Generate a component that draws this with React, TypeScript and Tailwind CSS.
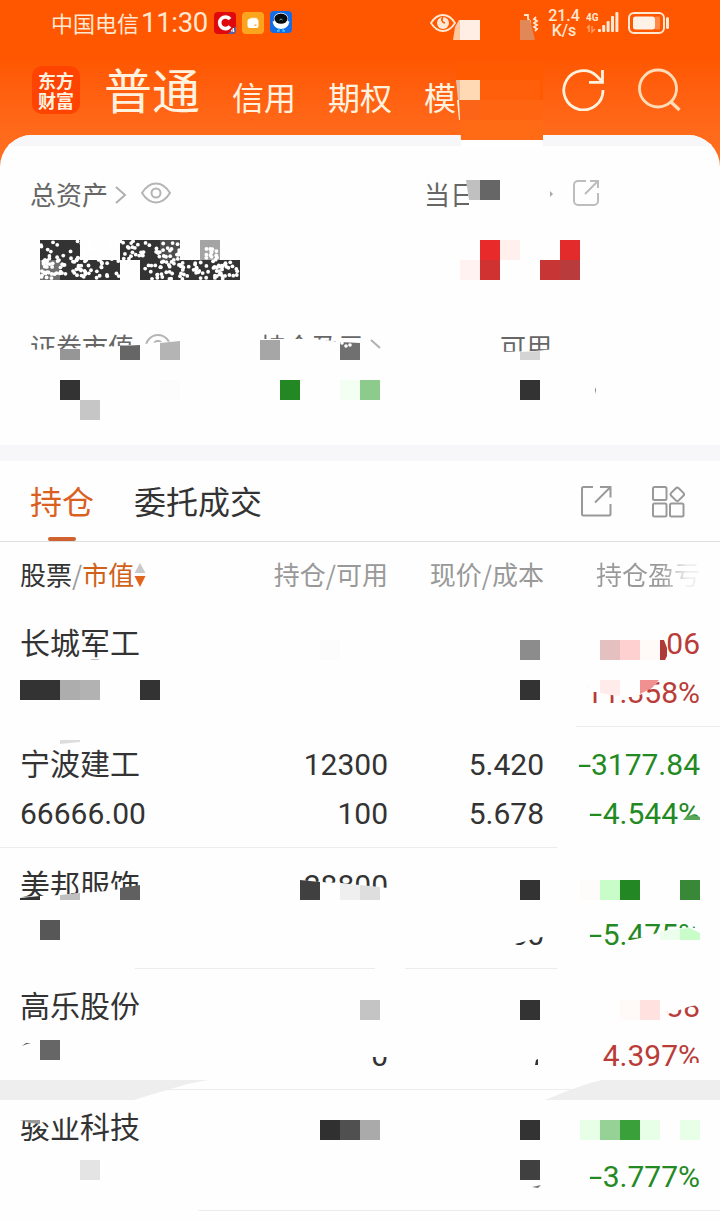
import React from 'react';

type Tone = 'up' | 'down';

interface Holding {
  name: string;
  value: string;
  amount: string;
  available: string;
  price: string;
  cost: string;
  profit: string;
  percent: string;
  tone: Tone;
  line: string;
}

const holdings: Holding[] = [
  { name: '长城军工', value: '', amount: '', available: '', price: '', cost: '', profit: '06', percent: '11.358%', tone: 'up', line: 'ml-[576px] w-[144px]' },
  { name: '宁波建工', value: '66666.00', amount: '12300', available: '100', price: '5.420', cost: '5.678', profit: '-3177.84', percent: '-4.544%', tone: 'down', line: 'w-[557px]' },
  { name: '美邦服饰', value: '', amount: '28800', available: '', price: '', cost: '50', profit: '', percent: '-5.475%', tone: 'down', line: 'ml-[135px] w-[422px]' },
  { name: '高乐股份', value: '', amount: '', available: '0', price: '', cost: '', profit: '38', percent: '4.397%', tone: 'up', line: 'ml-[160px] w-[420px]' },
  { name: '骏业科技', value: '', amount: '', available: '', price: '', cost: '', profit: '', percent: '-3.777%', tone: 'down', line: 'ml-[198px] w-[522px]' },
];

// x, y, width, fill (all blocks are 20px high)
const blocks: [number, number, number, string][] = [
  [40, 240, 40, '#333333'], [120, 240, 40, '#333333'], [160, 240, 20, '#4d4d4d'], [200, 240, 20, '#a4a4a4'],
  [40, 260, 20, '#707070'], [60, 260, 60, '#333333'], [140, 260, 100, '#333333'],
  [480, 240, 20, '#e82a2a'], [500, 240, 20, '#ffefed'], [560, 240, 20, '#e32b2b'],
  [460, 260, 20, '#fff2f0'], [480, 260, 20, '#d03232'], [540, 260, 20, '#c83535'], [560, 260, 20, '#b93b3b'],
  [60, 380, 20, '#333333'], [80, 400, 20, '#c6c6c6'], [160, 380, 20, '#fcfcfc'],
  [280, 380, 20, '#238823'], [340, 380, 20, '#f2fff2'], [360, 380, 20, '#8ccb8c'], [520, 380, 20, '#333333'],
  [320, 640, 20, '#fcfcfc'], [520, 640, 20, '#8c8c8c'], [600, 640, 20, '#e5c0c1'], [620, 640, 20, '#ffd0d0'], [640, 640, 20, '#fffaf8'],
  [20, 680, 40, '#333333'], [60, 680, 20, '#adadad'], [80, 680, 20, '#b2b2b2'], [140, 680, 20, '#333333'], [520, 680, 20, '#333333'],
  [520, 880, 20, '#333333'], [580, 880, 20, '#fefcfa'], [600, 880, 20, '#c8fcc8'], [620, 880, 20, '#238823'], [680, 880, 20, '#388838'],
  [40, 920, 20, '#575757'],
  [360, 1000, 20, '#c4c4c4'], [520, 1000, 20, '#333333'], [620, 1000, 20, '#fffaf8'], [640, 1000, 20, '#ffe2e0'],
  [40, 1040, 20, '#666666'],
  [320, 1120, 20, '#303030'], [340, 1120, 20, '#505050'], [360, 1120, 20, '#aaaaaa'], [520, 1120, 20, '#333333'],
  [580, 1120, 20, '#e6ffe6'], [600, 1120, 20, '#96d296'], [620, 1120, 20, '#3aa03a'], [640, 1120, 20, '#e6ffe6'], [680, 1120, 20, '#e6ffe6'],
  [80, 1160, 20, '#e4e4e4'], [520, 1160, 20, '#404040'],
];

// points, fill
const shapes: [string, string][] = [
  // top bar
  ['453,40 455,27 459,20 460,20 460,40', '#ffc9a0'],
  ['460,20 480,20 480,40 460,40', '#ffeee4'],
  ['520,20 530,20 535,40 520,40', '#e08858'],
  ['456,60 543,60 543,100 459,100 456,80', '#ff5a02'],
  ['459,100 543,100 543,120 460,120', '#ff6510'],
  ['460,120 543,120 543,140 461,140', '#ff6b14'],
  ['456,80 460,80 460,100 458,100', '#e8bda4'],
  ['460,80 480,80 480,100 460,100', '#ffd9b4'],
  ['480,80 540,80 540,100 480,100', '#ff5f0a'],
  ['460,100 480,100 480,120 460,120', '#fc6417'],
  ['457,100 459,100 460,120 459,120', '#fff3e0'],
  ['461,140 543,140 543,147 461,147', '#ffffff'],
  // daily profit label
  ['466,178 520,178 520,212 469,212 469,200', '#fefefe'],
  ['466,180 480,180 480,200 469,200', '#c0c0c0'],
  ['480,180 500,180 500,200 480,200', '#666666'],
  // summary labels
  ['25,350 60,349 120,346 145,344 160,342 185,341 185,366 25,366', '#fefefe'],
  ['60,349 80,349 80,360 60,360', '#969696'],
  ['120,346 140,345 140,360 120,360', '#666666'],
  ['160,343 180,341 180,360 160,360', '#b4b4b4'],
  ['255,339 312,339 325,340 340,342 368,343 368,366 255,366', '#fefefe'],
  ['260,340 280,340 280,360 260,360', '#a6a6a6'],
  ['340,342 360,343 360,360 340,360', '#707070'],
  ['495,352 535,351 555,349 555,366 495,366', '#fefefe'],
  ['520,352 540,351 540,360 520,360', '#d4d4d4'],
  ['595,387 596,390 595,394', '#777777'],
  // first row
  ['660,640 664,640 667,648 667,656 665,660 660,660', '#ae3a3a'],
  ['588,678 662,678 658,682 640,695 620,697 600,692 588,692', '#fefefe'],
  ['600,680 620,680 620,696 600,693', '#ffecea'],
  ['640,680 659,680 652,688 640,694', '#f09090'],
  ['90,659 100,659 98,660 92,660', '#bbbbbb'],
  // second row
  ['60,740 80,740 80,742 60,744', '#dddddd'],
  ['680,820 702,820 702,828 680,828', '#fefefe'],
  ['683,820 687,816 693,815 700,817 700,820', '#5aa75a'],
  // third row
  ['16,897 40,896 60,895 80,893 107,891 120,889 145,885 145,904 16,904', '#fefefe'],
  ['20,898 40,896 40,900 20,900', '#333333'],
  ['60,895 80,893 80,900 60,900', '#c0c0c0'],
  ['120,888 140,885 140,900 120,900', '#606060'],
  ['298,880 320,882 340,883 360,886 390,888 390,902 298,902', '#fefefe'],
  ['300,880 320,882 320,900 300,900', '#404040'],
  ['340,883 360,885 360,900 340,900', '#efefef'],
  ['360,885 380,887 380,900 360,900', '#dedede'],
  ['505,915 546,915 546,936 530,940 515,944 505,948', '#fefefe'],
  ['626,941 645,937 660,932 672,929 692,927 702,932 702,950 640,950', '#fefefe'],
  ['660,932 680,928 680,940 660,940', '#ecfeec'],
  ['680,929 690,928 700,933 700,940 680,940', '#c8fcc8'],
  // fourth row
  ['126,1019 130,1017 137,1014 142,1014 142,1024 126,1024', '#fefefe'],
  ['662,990 702,990 702,1004 688,1007 668,1014', '#fefefe'],
  ['370,1035 390,1035 390,1057 370,1057', '#fefefe'],
  ['535,1065 536,1060 538,1059 538,1065', '#333333'],
  ['22,1046 26,1043 31,1043 27,1044', '#555555'],
  ['690,1063 702,1063 702,1072 686,1072', '#fefefe'],
  // band between the fourth and the fifth row
  ['0,1080 208,1080 188,1084 160,1092 134,1100 0,1100', '#eeeeee'],
  ['545,1100 567,1091 590,1083 602,1080 720,1080 720,1100', '#eeeeee'],
  // fifth row
  ['18,1108 85,1108 98,1112 78,1115 60,1119 48,1123 40,1122 18,1120', '#fefefe'],
  ['20,1120 40,1120 40,1124 30,1123', '#999999'],
  ['532,1187 541,1185 538,1188', '#777777'],
  // gap in the divider
  ['375,966 405,966 405,971 375,971', '#fefefe'],
];

// white specks scattered over the hidden balance
const specks: { x: number; y: number }[] = [];
let seed = 17;
const next = () => {
  seed = (seed * 16807) % 2147483647;
  return seed / 2147483647;
};
for (let i = 0; i < 110; i++) specks.push({ x: 41 + next() * 78, y: i % 3 === 0 ? 241 + next() * 18 : 259 + next() * 20 });
for (let i = 0; i < 46; i++) specks.push({ x: 120 + next() * 60, y: 241 + next() * 19 });
for (let i = 0; i < 84; i++) specks.push({ x: 142 + next() * 97, y: 261 + next() * 18 });
for (let i = 0; i < 13; i++) specks.push({ x: 205 + next() * 13, y: 248 + next() * 12 });

const Mosaic: React.FC = () => (
  <svg className="absolute inset-0 pointer-events-none" width="720" height="1221" viewBox="0 0 720 1221" aria-hidden="true">
    {shapes.map(([points, fill], i) => <polygon key={i} points={points} fill={fill} />)}
    {blocks.map(([x, y, w, fill], i) => <rect key={i} x={x} y={y} width={w} height={20} fill={fill} shapeRendering="crispEdges" />)}
    {specks.map((s, i) => <circle key={i} cx={s.x} cy={s.y} r={1.9} fill="#fff" />)}
    <g fill="#fff">
      <circle cx="342" cy="343" r="1.8" />
      <circle cx="346" cy="346" r="1.8" />
      <circle cx="350" cy="345" r="1.8" />
    </g>
  </svg>
);

const StatusBar: React.FC = () => (
  <div className="flex h-[46px] items-center pl-[51px] text-[#ffe8d2]">
    <span className="-mt-[3px] text-[22px] leading-none">中国电信</span>
    <span className="ml-[2px] w-[73px] font-[Roboto] text-[27.5px] leading-none tracking-[-0.3px]">11:30</span>
    <div className="flex gap-[6px]">
      <svg width="22" height="22" viewBox="0 0 22 22">
        <rect width="22" height="22" rx="4" fill="#e0080f" />
        <path d="M16 7.2A5.8 5.8 0 1 0 16 14.4" fill="none" stroke="#fff" strokeWidth="3.6" />
        <path d="M22 14v4a4 4 0 0 1-4 4h-4z" fill="#5563a8" />
        <path d="M19.5 20v-4l-2.5 3h3.5" fill="none" stroke="#fff" strokeWidth="0.9" />
      </svg>
      <svg width="22" height="22" viewBox="0 0 22 22">
        <rect width="22" height="22" rx="4" fill="#fba41e" />
        <rect x="5.5" y="7" width="11" height="9" rx="2" fill="#fff" />
        <path d="M7 7l2-1.3h5L16 7z" fill="#fff3d8" />
        <rect x="12.5" y="12.5" width="2" height="1.4" fill="#fba41e" />
      </svg>
      <svg width="22" height="22" viewBox="0 0 22 22" className="-mt-px">
        <rect width="22" height="22" rx="4" fill="#156de6" />
        <path d="M2.500 10.500Q5 9 11 12q6-3 8.500-1.500Q18 18 11 18T2.500 10.500z" fill="#fff" />
        <ellipse cx="11" cy="7.800" rx="7.2" ry="6" fill="#fff" />
        <ellipse cx="11" cy="7.6" rx="6.6" ry="5.200" fill="#070b12" />
        <path d="M9.5 9Q11 6.8 12.5 9" fill="none" stroke="#4ad5a0" strokeWidth="1" />
        <path d="M9 17.5V20H7M13 17.5V20H15" fill="none" stroke="#41c8f5" strokeWidth="1.3" />
      </svg>
    </div>
    <svg className="ml-[138px]" width="26" height="20" viewBox="0 0 26 20" fill="none" stroke="currentColor" strokeWidth="1.8">
      <path d="M1 10Q6 2 13 2t12 8q-5 8-12 8T1 10z" />
      <circle cx="13" cy="10" r="6" fill="currentColor" stroke="none" />
      <path d="M13 4a3.500 3.500 0 0 0 2 6" stroke="#ff5600" strokeWidth="1.6" />
    </svg>
    <svg className="ml-[67px]" width="16" height="22" viewBox="0 0 16 22" fill="none" stroke="currentColor" strokeWidth="1.8">
      <path d="M1 3h4v4l2 2v7" />
      <path d="M13 5l-2 2 3 2-3 2 3 2-3 2 3 2-2 2" />
    </svg>
    <div className="ml-[8px] w-[34px] whitespace-pre-line text-center font-[Roboto] text-[16px] font-medium leading-[15px]">
      {'21.4\nK/s'}
    </div>
    <svg className="ml-[5px]" width="34" height="24" viewBox="0 0 34 24">
      <g fill="currentColor">
        <rect x="12" y="18" width="3" height="3" rx="1" />
        <rect x="16.2" y="14" width="3" height="7" rx="1" />
        <rect x="20.6" y="10" width="3" height="11" rx="1" />
        <rect x="25" y="5" width="3" height="16" rx="1" />
        <rect x="29.4" y="1" width="3" height="20" rx="1" />
        <text x="0" y="10" fontSize="10" fontWeight="700" fontFamily="Roboto">4G</text>
      </g>
      <path d="M1 17l2-2v6M6 15v6l3-3" fill="none" stroke="#ffa36c" strokeWidth="1.4" />
    </svg>
    <svg className="-mt-px ml-[8px]" width="42" height="24" viewBox="0 0 42 24">
      <rect x="1" y="2" width="35" height="20" rx="5" fill="none" stroke="currentColor" strokeWidth="2" />
      <rect x="5" y="5.500" width="22" height="13" rx="2.500" fill="#fff3e8" />
      <rect x="27" y="5.500" width="5" height="13" rx="1" fill="#ff8a48" />
      <rect x="38" y="6" width="3" height="12" rx="1.500" fill="currentColor" />
    </svg>
  </div>
);

const TopNav: React.FC = () => (
  <div className="flex h-[89px] text-[#fff3e0]">
    <div className="ml-8 mt-5 flex h-12 w-12 items-center justify-center rounded-[10px] bg-[#ff4300]">
      <span className="w-9 break-all text-[18px] font-bold leading-[20px]">东方财富</span>
    </div>
    <span className="ml-[24px] mt-[18px] text-[48px] leading-none">普通</span>
    <span className="ml-8 mt-[34px] text-[32px] leading-none">信用</span>
    <span className="ml-8 mt-[34px] text-[32px] leading-none">期权</span>
    <span className="ml-8 mt-[34px] w-[137px] text-[32px] leading-none">模</span>
    <svg className="mt-[21px]" width="44" height="44" viewBox="0 0 44 44" fill="none" stroke="currentColor" strokeWidth="2.800">
      <path d="M42 23A19.600 19.600 0 1 1 36 9.200L40.500 14" />
      <path d="M28 15.300h13.500V3" />
    </svg>
    <svg className="ml-[32px] mt-[22px] text-[#ffdcb8]" width="45" height="44" viewBox="0 0 45 44" fill="none" stroke="currentColor" strokeWidth="2.800">
      <circle cx="21" cy="20.500" r="18.500" />
      <path d="M33.500 33.500l9 8.500" strokeWidth="3.200" />
    </svg>
  </div>
);

const Summary: React.FC = () => (
  <div className="h-[299px] text-[26px] leading-none text-[#666]">
    <div className="flex h-[94px] items-center pl-[30px] pt-[4px]">
      <span className="-mt-[3px]">总资产</span>
      <svg className="ml-[7px]" width="12" height="20" viewBox="0 0 12 20" fill="none" stroke="#b0b0b0" strokeWidth="2"><path d="M1 2l9 8-9 8" /></svg>
      <svg className="-mt-1 ml-[13px]" width="32" height="22" viewBox="0 0 32 22" fill="none" stroke="#b4b4b4" strokeWidth="2">
        <path d="M2 11Q8 1.500 16 1.500T30 11q-6 9.500-14 9.500T2 11z" />
        <circle cx="16" cy="11" r="4.500" />
      </svg>
      <span className="-mt-[3px] ml-[252px] w-[126px]">当日</span>
      <svg className="-mt-[2px]" width="4" height="8" viewBox="0 0 4 8" fill="#aaa"><path d="M0 1l3 3-3 3z" /></svg>
      <svg className="-mt-1 ml-[18px]" width="28" height="28" viewBox="0 0 28 28" fill="none" stroke="#bdbdbd" strokeWidth="2">
        <path d="M14 2H6a4 4 0 0 0-4 4v16a4 4 0 0 0 4 4h16a4 4 0 0 0 4-4v-8" />
        <path d="M18 2h8v7M26 2L13 15" />
      </svg>
    </div>
    <div className="flex pl-[30px] pt-[93px]">
      <span>证券市值</span>
      <svg className="ml-[11px] mt-px" width="26" height="26" viewBox="0 0 26 26" fill="none" stroke="#b4b4b4" strokeWidth="2">
        <circle cx="13" cy="13" r="12" />
        <path d="M9 10a4 4 0 1 1 4 5v2" />
      </svg>
      <span className="ml-[89px]">持仓盈亏</span>
      <svg className="ml-[6px] mt-[6px]" width="12" height="12" viewBox="0 0 12 12" fill="none" stroke="#b0b0b0" strokeWidth="2"><path d="M1 1l9 8" /></svg>
      <span className="ml-[118px]">可用</span>
    </div>
  </div>
);

const Tabs: React.FC = () => (
  <div className="flex h-[81px] border-b border-[#dedede] pl-[30px] text-[32px] leading-none text-[#333]">
    <div className="flex flex-col items-center pt-[23px] text-[#d9601f]">
      <span>持仓</span>
      <span className="mt-[21px] h-1 w-7 rounded-full bg-[#cf622e]" />
    </div>
    <span className="ml-10 pt-[23px]">委托成交</span>
    <svg className="ml-[318px] mt-6" width="32" height="32" viewBox="0 0 32 32" fill="none" stroke="#999" strokeWidth="2">
      <path d="M13 2H3.500a1.500 1.500 0 0 0-1.500 1.500v25.500A1.500 1.500 0 0 0 3.500 30.500H29a1.500 1.500 0 0 0 1.500-1.500V19" />
      <path d="M20 2h10.500V12.500M30.500 2L15 17.500" />
    </svg>
    <svg className="ml-[39px] mt-6" width="34" height="33" viewBox="0 0 34 33" fill="none" stroke="#999" strokeWidth="2">
      <rect x="2" y="2" width="13.500" height="13" rx="1.500" />
      <rect x="2" y="18.500" width="13.500" height="13" rx="1.500" />
      <rect x="19" y="18.500" width="13.500" height="13" rx="1.500" />
      <rect x="21" y="4" width="10.600" height="10.600" rx="2" transform="rotate(45 26.300 9.300)" />
    </svg>
  </div>
);

const toneColor: Record<Tone, string> = {
  up: 'text-[#b93c38]',
  down: 'text-[#238a23]',
};

const Change: React.FC<{ text: string, tone: Tone }> = ({ text, tone }) => (
  <span className={toneColor[tone]}>
    {text.startsWith('-') && <span className="inline-block origin-right scale-x-[1.6]">-</span>}
    {text.replace('-', '')}
  </span>
);

const HoldingRow: React.FC<{ item: Holding }> = ({ item }) => (
  <div className="flex h-[121px] flex-col">
    <div className="grid h-[120px] grid-cols-[200px_168px_156px_156px] grid-rows-[49px_49px] items-center pl-5 pt-[13px] text-right font-[Roboto] text-[30px] leading-none text-[#333]">
      <span className="-mt-[5px] text-left font-['Noto_Sans_CJK_SC']">{item.name}</span>
      <span>{item.amount}</span>
      <span>{item.price}</span>
      <Change text={item.profit} tone={item.tone} />
      <span className="text-left">{item.value}</span>
      <span>{item.available}</span>
      <span>{item.cost}</span>
      <Change text={item.percent} tone={item.tone} />
    </div>
    <div className={`h-px bg-[#ececec] ${item.line}`} />
  </div>
);

const App: React.FC = () => (
  <div className="relative h-[1221px] w-[720px] overflow-hidden bg-[#fefefe] font-['Noto_Sans_CJK_SC',sans-serif]">
    <div className="bg-linear-to-b from-[#ff5600] from-[55px] to-[#ff7020] to-[160px]">
      <StatusBar />
      <TopNav />
      <div className="overflow-hidden rounded-t-[32px] bg-[#fefefe]">
        <div className="h-[11px] bg-[#f7f7f9]" />
        <Summary />
      </div>
    </div>
    <div className="h-4 bg-[#f7f7f9]" />
    <Tabs />
    <div className="grid h-[64px] grid-cols-[200px_168px_156px_156px] items-center pl-5 text-right text-[26px] leading-none text-[#999]">
      <div className="flex items-center">
        <span className="text-[#333]">股票</span>
        <span>/</span>
        <span className="text-[#d06018]">市值</span>
        <svg className="mt-[2px]" width="12" height="24" viewBox="0 0 12 24">
          <path d="M6 0l5.500 10H.5z" fill="#c9c9c9" />
          <path d="M6 24L.5 13h11z" fill="#e2641c" />
        </svg>
      </div>
      <span>持仓/可用</span>
      <span>现价/成本</span>
      <span className="bg-linear-to-r from-[#999] from-[75%] to-[#eee] to-[92%] bg-clip-text text-transparent">持仓盈亏</span>
    </div>
    {holdings.map(item => <HoldingRow key={item.name} item={item} />)}
    <Mosaic />
  </div>
);

export default App;
